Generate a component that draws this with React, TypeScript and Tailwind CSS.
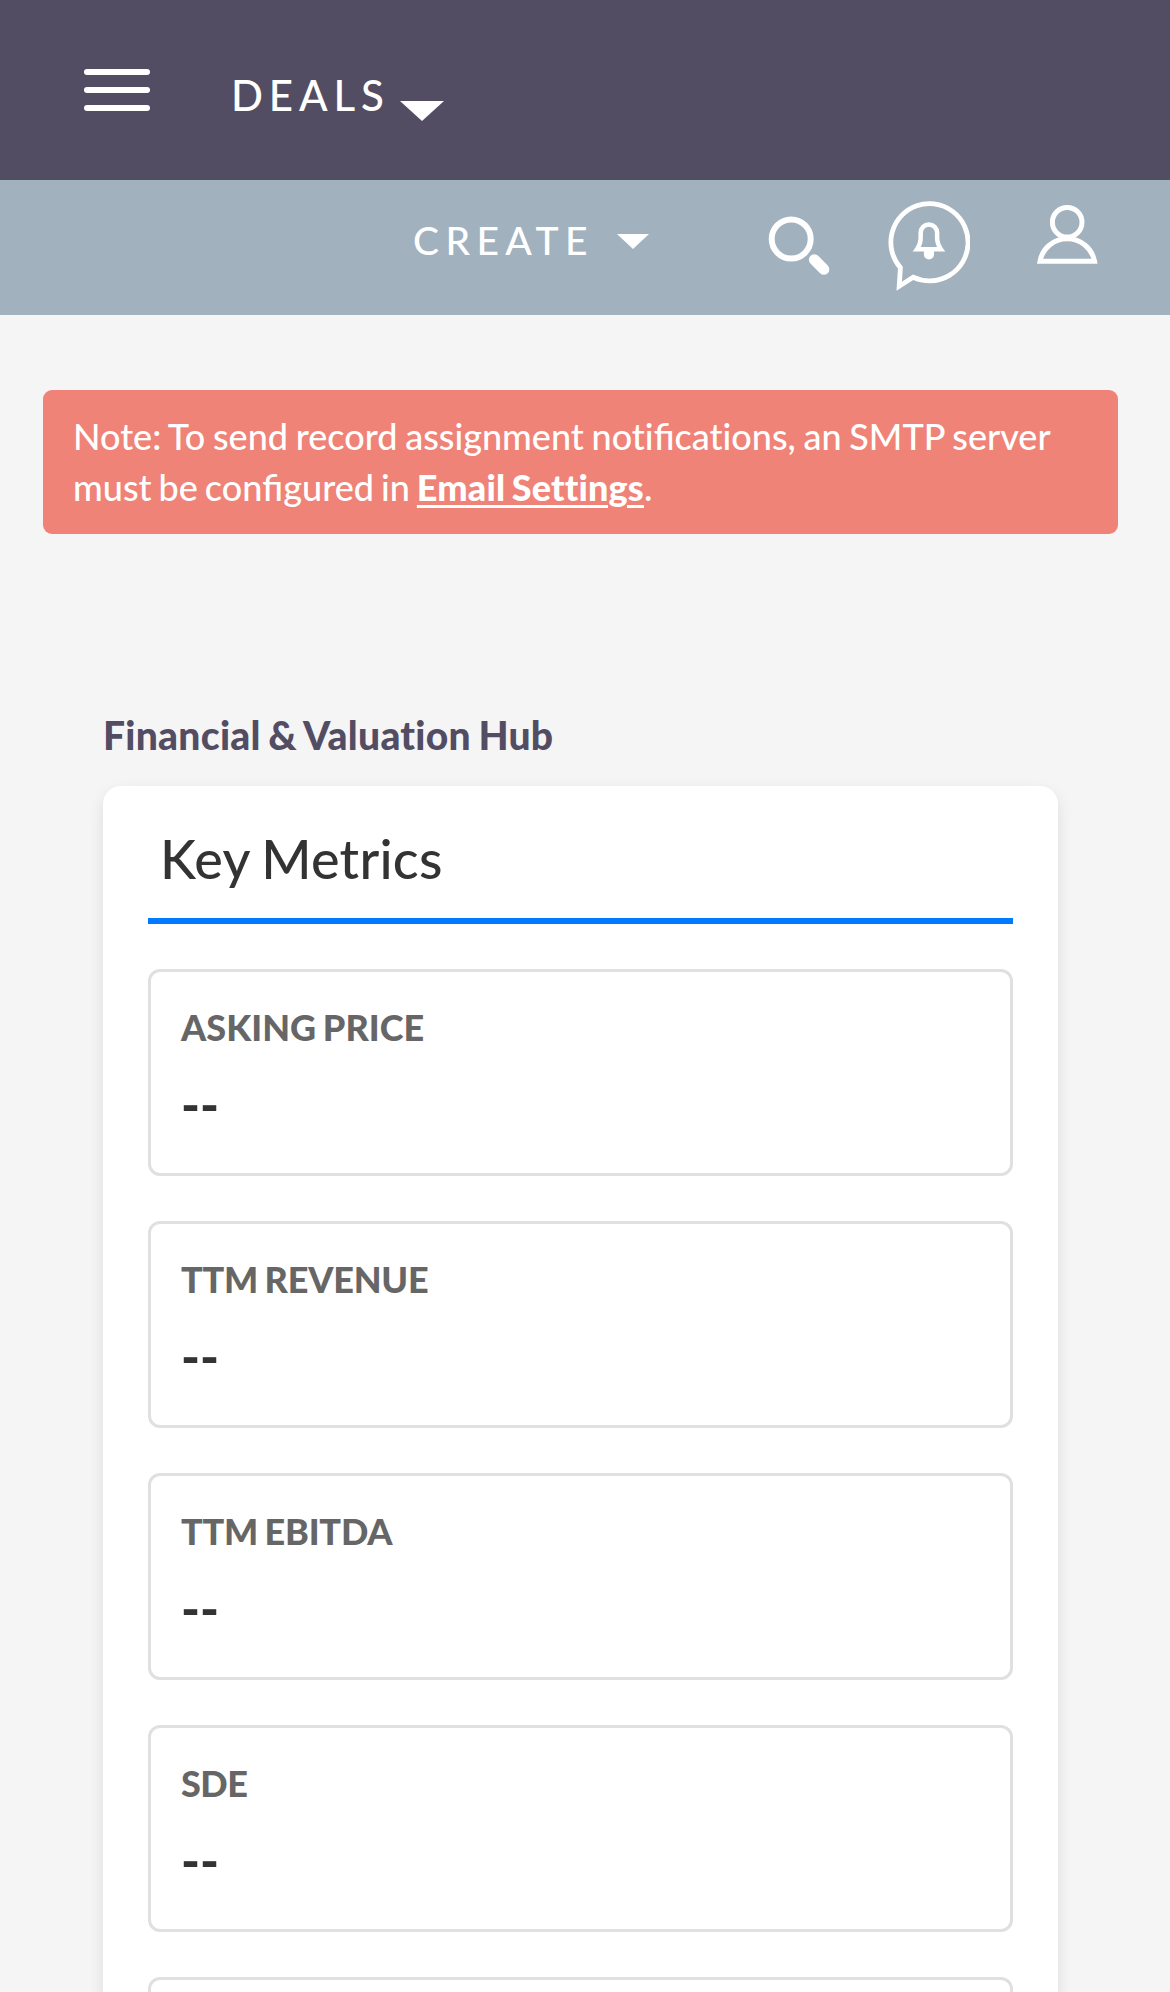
import React from "react";

const metrics = [
  { label: "ASKING PRICE", tracking: "tracking-[0.04px]" },
  { label: "TTM REVENUE", tracking: "tracking-[-0.2px]" },
  { label: "TTM EBITDA", tracking: "tracking-[-0.2px]" },
  { label: "SDE", tracking: "tracking-[-0.5px]" },
];

function SearchIcon() {
  return (
    <svg width="62" height="62" viewBox="768 216 62 62" fill="none" stroke="white">
      <circle cx="791.2" cy="239" r="19.5" strokeWidth="6" />
      <path d="M814.3 259.6L823.9 269.4" strokeWidth="10.8" strokeLinecap="round" />
    </svg>
  );
}

function BellBubbleIcon() {
  return (
    <svg width="84" height="94" viewBox="887 199 84 94" fill="none" stroke="white" strokeWidth="4.8" strokeMiterlimit="10">
      <path d="M901.4 268.700L900.2 287.200L914.2 278.300A38.600 38.600 0 1 0 901.4 268.700Z" />
      <path d="M918 250.200C921 246 921.700 242.500 921.700 238V233.600A8.200 8.200 0 0 1 938.100 233.600V238C938.100 242.500 938.900 246 941.900 250.200Z" strokeWidth="4.5" />
      <path d="M924.9 251H935V255.4A5.05 5.05 0 0 1 924.9 255.4Z" fill="white" stroke="none" />
    </svg>
  );
}

function UserIcon() {
  return (
    <svg width="62" height="60" viewBox="1036 205 62 60" fill="none" stroke="white" strokeWidth="5">
      <circle cx="1067.2" cy="222.3" r="14.8" />
      <path d="M1040 261.3C1042.200 248.500 1053.500 238.800 1067.200 238.800C1081 238.800 1092.200 248.500 1094.500 261.300Z" />
    </svg>
  );
}

function Fi() {
  return <span className="[font-variant-ligatures:common-ligatures]">fi</span>;
}

function MetricCard({ label, tracking }: { label: string; tracking: string }) {
  return (
    <div className="h-[207px] rounded-xl border-[3px] border-[#e0e0e0] p-[30px]">
      <div className={`text-[36px] leading-[51px] font-black text-[#666] [word-spacing:-2px] ${tracking}`}>{label}</div>
      <div className="mt-[14px] text-[51px] leading-[75px] font-black text-[#333]">--</div>
    </div>
  );
}

export default function App() {
  return (
    <div className="h-[1992px] overflow-hidden bg-[#f5f5f5] font-[Lato,sans-serif] [font-variant-ligatures:none]">
      <header className="flex h-[180px] items-start bg-[#534d64] pl-[84px] text-white">
        <div className="mt-[69px] flex w-[66px] flex-col gap-3">
          <span className="h-1.5 rounded-full bg-white" />
          <span className="h-1.5 rounded-full bg-white" />
          <span className="h-1.5 rounded-full bg-white" />
        </div>
        <span className="mt-[65px] ml-[81px] w-[158px] text-[42px] leading-[60px] font-medium tracking-[5.9px]">DEALS</span>
        <svg className="mt-[101px] ml-[11px]" width="44" height="20" viewBox="0 0 44 20" fill="white">
          <path d="M0 0H44L22 20Z" />
        </svg>
      </header>
      <div className="flex h-[135px] items-start bg-[#a2b1be] pl-[412px] text-white">
        <span className="mt-[32px] ml-px w-[181px] text-[39px] leading-[56px] font-medium tracking-[6.4px]">CREATE</span>
        <svg className="mt-[54px] ml-[23px]" width="32" height="15" viewBox="0 0 32 15" fill="white">
          <path d="M0 0H32L16 15Z" />
        </svg>
        <div className="ml-auto flex items-start pr-[72px]">
          <div className="mt-[36px]"><SearchIcon /></div>
          <div className="mt-[18px] ml-[56px]"><BellBubbleIcon /></div>
          <div className="mt-[25px] ml-[66px]"><UserIcon /></div>
        </div>
      </div>
      <div className="mt-[75px] mr-[52px] ml-[43px] h-[144px] rounded-[9px] bg-[#f08377] px-[30px] py-[20.500px] text-[36px] leading-[51.400px] font-medium whitespace-nowrap text-white">
        <p className="[word-spacing:-1.4px]">
          Note: To send record assignment noti<Fi />cations, an SMTP server
        </p>
        <p className="[word-spacing:-2.1px]">
          must be con<Fi />gured in{" "}
          <a className="font-black tracking-[0.15px] underline decoration-[3px] underline-offset-[4px]">Email Settings</a>.
        </p>
      </div>
      <main className="mr-[112px] ml-[103px]">
        <h2 className="mt-[173px] text-[39px] leading-[56px] font-black tracking-[0.27px] text-[#534d64] [word-spacing:-2px]">
          Financial &amp; Valuation Hub
        </h2>
        <section className="mt-[23px] h-[1400px] rounded-[18px] bg-white px-[45px] pt-[43px] shadow-[0_6px_15px_rgba(0,0,0,0.1)]">
          <h3 className="h-[95px] border-b-[6px] border-[#007bff] pl-[12px] text-[54px] leading-[60px] font-medium tracking-[0.25px] text-[#333] [word-spacing:-2px]">
            Key Metrics
          </h3>
          <div className="mt-[45px] flex flex-col gap-[45px]">
            {metrics.map((m) => (
              <MetricCard key={m.label} label={m.label} tracking={m.tracking} />
            ))}
            <div className="h-[207px] rounded-xl border-[3px] border-[#e0e0e0]" />
          </div>
        </section>
      </main>
    </div>
  );
}
